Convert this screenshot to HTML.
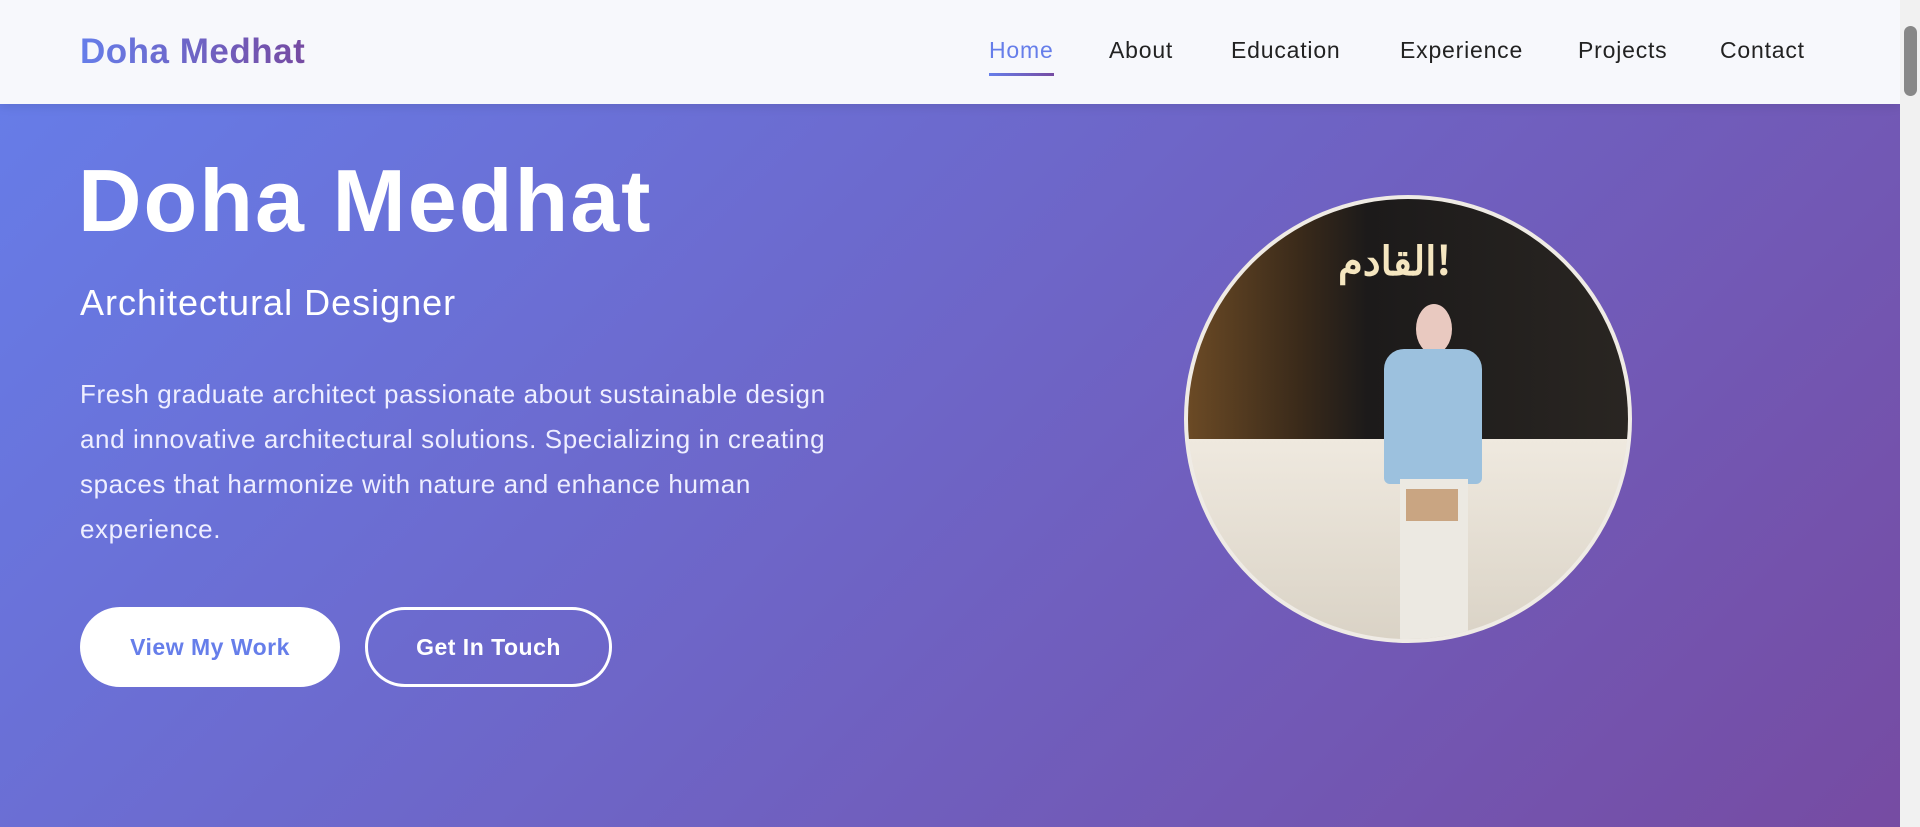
<!DOCTYPE html>
<html><head><meta charset="utf-8"><style>
*{margin:0;padding:0;box-sizing:border-box}
body{width:1920px;height:827px;overflow:hidden;font-family:"Liberation Sans",sans-serif;position:relative;background:linear-gradient(135deg,#667eea 0%,#764ba2 100%)}
nav{position:absolute;left:0;top:0;width:1900px;height:104px;background:#f7f8fc;box-shadow:0 2px 10px rgba(0,0,0,.1)}
.logo{position:absolute;left:80px;top:32px;font-size:35px;font-weight:bold;letter-spacing:0.5px;background:linear-gradient(90deg,#667eea,#764ba2);-webkit-background-clip:text;color:transparent}
.nl{position:absolute;top:37px;font-size:23px;color:#222;letter-spacing:0.8px}
.nl.a{color:#667eea}
.nl.a:after{content:"";position:absolute;left:0;right:0;bottom:-12px;height:3px;background:linear-gradient(90deg,#667eea,#764ba2)}
h1{position:absolute;left:78px;top:150px;font-size:88px;color:#fff;font-weight:bold;letter-spacing:2px}
h2{position:absolute;left:80px;top:282px;font-size:36px;color:#fff;font-weight:normal;letter-spacing:1px}
p{position:absolute;left:80px;top:372px;font-size:26px;line-height:45px;color:#eef;white-space:nowrap;letter-spacing:0.6px}
.b{position:absolute;top:607px;height:80px;border-radius:40px;font-size:23px;font-weight:bold;display:flex;align-items:center;justify-content:center;letter-spacing:0.5px}
.b1{left:80px;width:260px;background:#fff;color:#667eea}
.b2{left:365px;width:247px;border:3px solid #fff;color:#fff}
.ph{position:absolute;left:1184px;top:195px;width:448px;height:448px;border-radius:50%;overflow:hidden;border:4px solid rgba(255,255,255,.3);background:#e8e3da}
.sb{position:absolute;right:0;top:0;width:20px;height:827px;background:#f1f1f1}
.th{position:absolute;right:3px;top:26px;width:13px;height:70px;border-radius:7px;background:#888}
</style></head><body>
<nav><div class="logo">Doha Medhat</div>
<span class="nl a" style="left:989px">Home</span>
<span class="nl" style="left:1109px">About</span>
<span class="nl" style="left:1231px">Education</span>
<span class="nl" style="left:1400px">Experience</span>
<span class="nl" style="left:1578px">Projects</span>
<span class="nl" style="left:1720px">Contact</span>
</nav>
<h1>Doha Medhat</h1>
<h2>Architectural Designer</h2>
<p>Fresh graduate architect passionate about sustainable design<br>and innovative architectural solutions. Specializing in creating<br>spaces that harmonize with nature and enhance human<br>experience.</p>
<div class="b b1">View My Work</div>
<div class="b b2">Get In Touch</div>
<div class="ph">
<div style="position:absolute;left:0;top:0;width:448px;height:240px;background:linear-gradient(90deg,#6b4a25 0%,#3a2a1a 25%,#1c1a1a 40%,#2a2622 100%)"></div>
<div style="position:absolute;left:150px;top:30px;color:#f5e6c0;font-size:40px;font-family:'Noto Sans CJK SC',sans-serif;font-weight:bold">القادم!</div>
<div style="position:absolute;left:0;top:240px;width:448px;height:208px;background:linear-gradient(#efe9df,#d9d2c5)"></div>
<div style="position:absolute;left:228px;top:105px;width:36px;height:50px;border-radius:50%;background:#e9c9c0"></div>
<div style="position:absolute;left:196px;top:150px;width:98px;height:135px;border-radius:20px 20px 6px 6px;background:#9cc1de"></div>
<div style="position:absolute;left:212px;top:280px;width:68px;height:170px;background:#ece9e2"></div>
<div style="position:absolute;left:218px;top:290px;width:52px;height:32px;background:#c9a582"></div>
</div>
<div class="sb"><div class="th"></div></div>
</body></html>
